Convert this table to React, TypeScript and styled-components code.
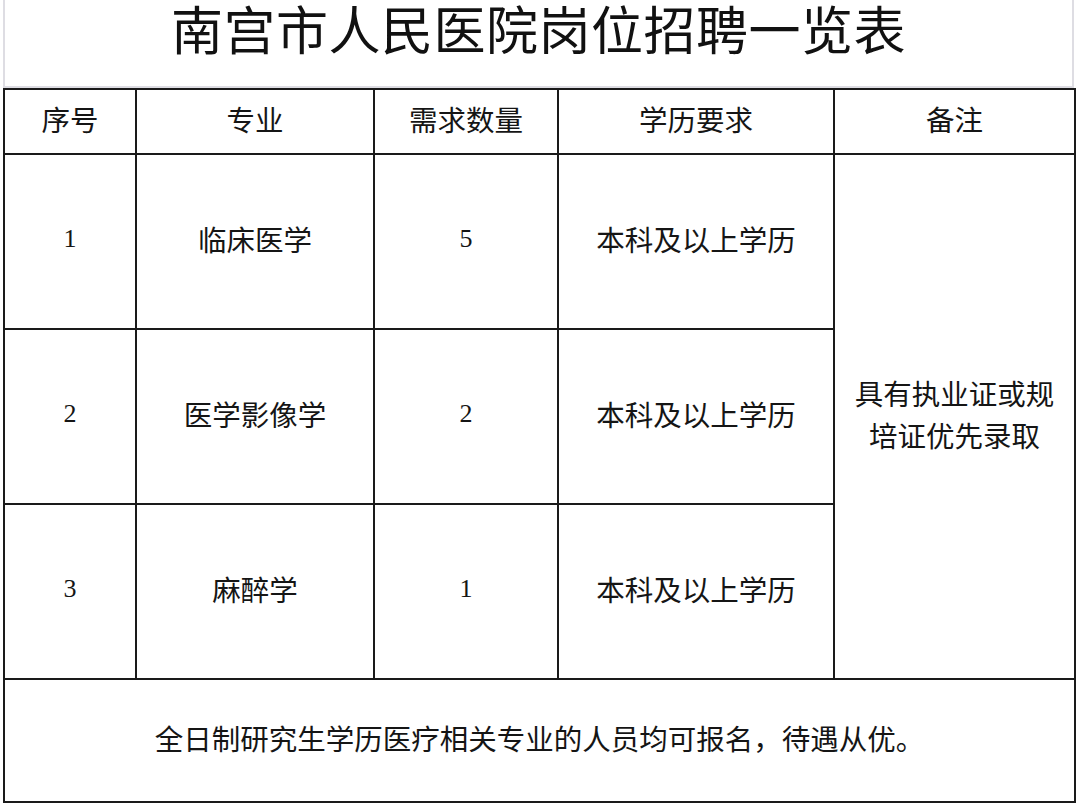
import React from 'react';
import styled, { createGlobalStyle } from 'styled-components';

// --- Стили ---
const GlobalStyle = createGlobalStyle`
  html, body {
    margin: 0;
    padding: 0;
    background: #ffffff;
  }
  body {
    font-family: "Noto Sans CJK SC", "Noto Sans", sans-serif;
    color: #151515;
  }
`;

const Sheet = styled.div`
  width: 1071px;
  margin-left: 3px;
  display: flex;
  flex-direction: column;
`;

const TitleBox = styled.div`
  height: 88px;
  box-sizing: border-box;
  border-left: 2px solid #dedde3;
  border-right: 2px solid #dedde3;
  border-bottom: 2px solid #dedde3;
  display: flex;
  justify-content: center;
  align-items: flex-start;
  padding-top: 1px;
`;

const Title = styled.h1`
  margin: 0;
  font-size: 52px;
  line-height: 54px;
  font-weight: 400;
  letter-spacing: 0.5px;
  color: #111;
`;

const Table = styled.table`
  width: 1071px;
  border-collapse: collapse;
  table-layout: fixed;
  border: 2px solid #1a1a1a;
`;

const Cell = styled.td<{ $h?: number; $serif?: boolean }>`
  border: 2px solid #1a1a1a;
  height: ${(p) => (p.$h ? `${p.$h}px` : 'auto')};
  padding: 0 0 6px 0;
  text-align: center;
  vertical-align: middle;
  font-size: ${(p) => (p.$serif ? '26px' : '28.5px')};
  font-family: ${(p) =>
    p.$serif
      ? '"Liberation Serif", "Noto Sans CJK SC", serif'
      : '"Noto Sans CJK SC", "Noto Sans", sans-serif'};
  line-height: 42px;
  color: #151515;
`;

const HeadCell = styled(Cell).attrs({ as: 'th' })`
  font-weight: 400;
`;

const NoteText = styled.div`
  width: 206px;
  margin: 0 auto;
  font-size: 28.5px;
  line-height: 42px;
`;

const rows = [
  { no: '1', major: '临床医学', count: '5', edu: '本科及以上学历' },
  { no: '2', major: '医学影像学', count: '2', edu: '本科及以上学历' },
  { no: '3', major: '麻醉学', count: '1', edu: '本科及以上学历' },
];

// --- Основной компонент ---
const App: React.FC = () => {
  return (
    <>
      <GlobalStyle />
      <Sheet>
        <TitleBox>
          <Title>南宫市人民医院岗位招聘一览表</Title>
        </TitleBox>
        <Table>
          <colgroup>
            <col style={{ width: 132 }} />
            <col style={{ width: 238 }} />
            <col style={{ width: 184 }} />
            <col style={{ width: 276 }} />
            <col style={{ width: 241 }} />
          </colgroup>
          <thead>
            <tr>
              <HeadCell $h={57}>序号</HeadCell>
              <HeadCell>专业</HeadCell>
              <HeadCell>需求数量</HeadCell>
              <HeadCell>学历要求</HeadCell>
              <HeadCell>备注</HeadCell>
            </tr>
          </thead>
          <tbody>
            {rows.map((r, i) => (
              <tr key={r.no}>
                <Cell $h={167} $serif>{r.no}</Cell>
                <Cell>{r.major}</Cell>
                <Cell $serif>{r.count}</Cell>
                <Cell>{r.edu}</Cell>
                {i === 0 && (
                  <Cell rowSpan={3}>
                    <NoteText>具有执业证或规培证优先录取</NoteText>
                  </Cell>
                )}
              </tr>
            ))}
            <tr>
              <Cell colSpan={5} $h={115}>
                全日制研究生学历医疗相关专业的人员均可报名，待遇从优。
              </Cell>
            </tr>
          </tbody>
        </Table>
      </Sheet>
    </>
  );
};

export default App;
